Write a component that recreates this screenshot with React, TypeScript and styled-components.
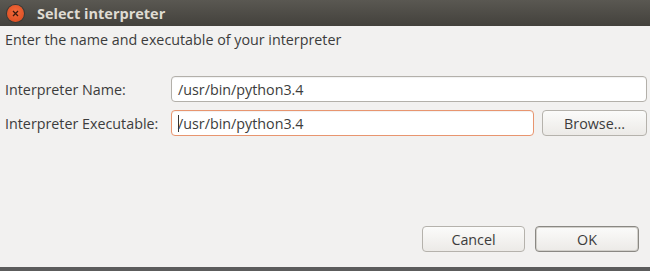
import React from 'react'
import styled, { createGlobalStyle } from 'styled-components'

const Global = createGlobalStyle`
  html, body { margin:0; padding:0; background:#f2f1f0; }
  body { font-family: "Open Sans", "Noto Sans", sans-serif; }
`

const Window = styled.div`
  width:650px;
  height:271px;
  display:flex;
  flex-direction:column;
  background:#f2f1f0;
  overflow:hidden;
`

const TitleBar = styled.div`
  height:26px;
  flex:none;
  display:flex;
  align-items:center;
  gap:13px;
  padding-left:7px;
  background:linear-gradient(#5a5852, #43413c);
  color:#dfdbd2;
  font-weight:700;
  font-size:14.5px;
`

const CloseBtn = styled.div`
  width:17px;
  height:17px;
  border-radius:50%;
  background:radial-gradient(circle at 50% 40%, #f26a3c, #d9491d);
  box-shadow:0 0 0 1px #3a3833;
  display:flex;
  align-items:center;
  justify-content:center;
`

const Body = styled.div`
  flex:1;
  display:flex;
  flex-direction:column;
  padding:0 3px 0 5px;
  color:#3c3c3c;
  font-size:14.3px;
`

const Message = styled.div`
  height:28px;
  line-height:28px;
`

const Form = styled.div`
  margin-top:22px;
  display:grid;
  grid-template-columns:166px 1fr auto;
  row-gap:8px;
  align-items:center;
`

const Label = styled.div``

const Field = styled.div<{ $focus?: boolean; $span?: boolean }>`
  height:26px;
  box-sizing:border-box;
  grid-column:${p => (p.$span ? '2 / 4' : 'auto')};
  border:1px solid ${p => (p.$focus ? '#e8956f' : '#b3b0aa')};
  border-radius:4px;
  background:#fff;
  display:flex;
  align-items:center;
  padding-left:6px;
  color:#3c3c3c;
  box-shadow:inset 0 1px 1px rgba(0,0,0,0.06);
`

const Caret = styled.span`
  display:inline-block;
  width:1px;
  height:17px;
  background:#333;
  margin-right:-1px;
`

const Button = styled.div<{ $default?: boolean }>`
  width:${p => (p.$default ? '104px' : '103px')};
  height:26px;
  box-sizing:border-box;
  border:1px solid ${p => (p.$default ? '#8a8883' : '#b5b2ac')};
  box-shadow:${p => (p.$default ? 'inset 0 0 0 1px #d2d0cb' : 'none')};
  border-radius:4px;
  background:linear-gradient(#fbfbfa, #eceae7);
  display:flex;
  align-items:center;
  justify-content:center;
  color:#3c3c3c;
  font-size:14.3px;
`

const Browse = styled(Button)`
  margin-left:8px;
  width:105px;
`

const Spacer = styled.div`
  flex:1;
`

const Actions = styled.div`
  display:flex;
  justify-content:flex-end;
  gap:10px;
  padding-right:8px;
  margin-bottom:15px;
`

const Taskbar = styled.div`
  height:4px;
  flex:none;
  background:#5c5c5c;
`

export default function App() {
  return (
    <>
      <Global />
      <Window>
        <TitleBar>
          <CloseBtn>
            <svg width="7" height="7" viewBox="0 0 7 7">
              <path d="M1 1L6 6M6 1L1 6" stroke="#3b1a0e" strokeWidth="1.3" />
            </svg>
          </CloseBtn>
          Select interpreter
        </TitleBar>
        <Body>
          <Message>Enter the name and executable of your interpreter</Message>
          <Form>
            <Label>Interpreter Name:</Label>
            <Field $span>/usr/bin/python3.4</Field>
            <Label>Interpreter Executable:</Label>
            <Field $focus>
              <Caret />/usr/bin/python3.4
            </Field>
            <Browse>Browse...</Browse>
          </Form>
          <Spacer />
          <Actions>
            <Button>Cancel</Button>
            <Button $default>OK</Button>
          </Actions>
        </Body>
        <Taskbar />
      </Window>
    </>
  )
}
